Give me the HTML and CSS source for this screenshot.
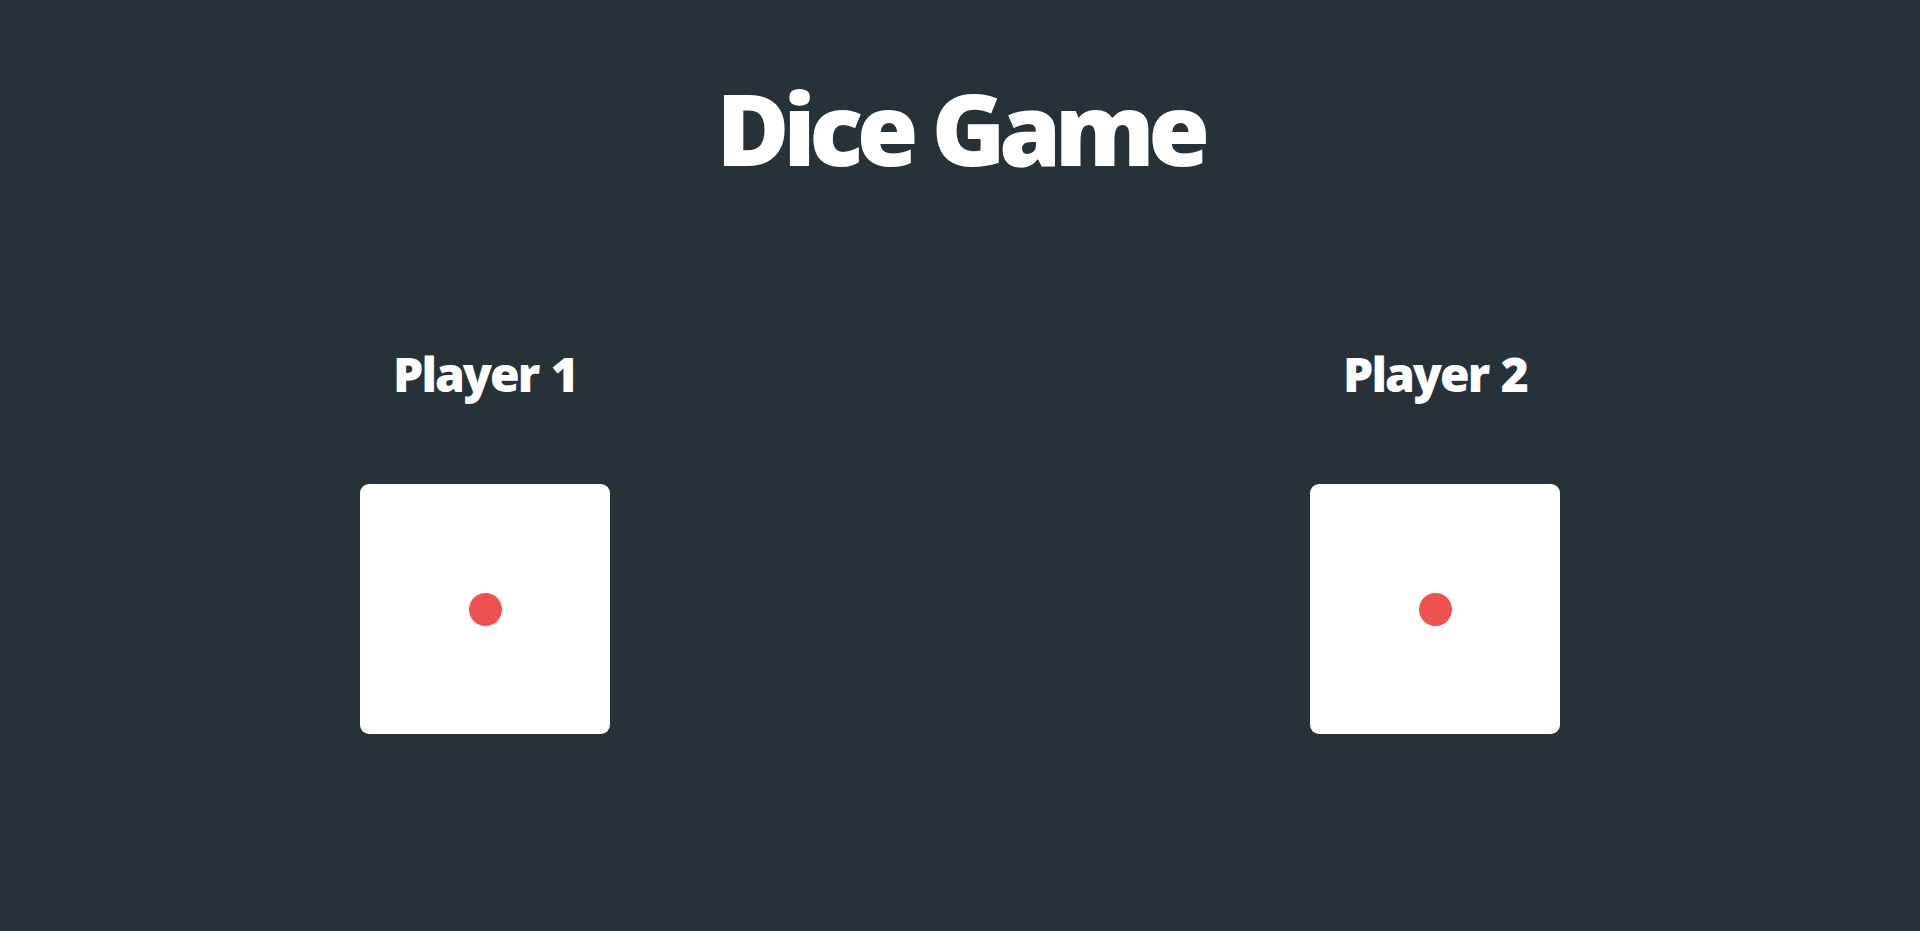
FILE: index.html
```html
<!DOCTYPE html>
<html lang="en">
<head>
<meta charset="utf-8">
<title>Dice Game</title>
<link rel="stylesheet" href="styles.css">
</head>
<body>
<div class="page">
  <h1 class="title">Dice Game</h1>
  <div class="players">
    <div class="player">
      <h2 class="player-name">Player 1</h2>
      <div class="die"><span class="pip"></span></div>
    </div>
    <div class="player">
      <h2 class="player-name">Player 2</h2>
      <div class="die"><span class="pip"></span></div>
    </div>
  </div>
</div>
</body>
</html>
```

FILE: styles.css
```css
html, body {
  margin: 0;
  padding: 0;
  height: 100%;
}
body {
  background: #263238;
  color: #ffffff;
  font-family: "Open Sans", "Noto Sans", sans-serif;
}
.page {
  display: flex;
  flex-direction: column;
  align-items: center;
  padding: 77px 10px 0;
}
.title {
  margin: 0;
  font-size: 100px;
  line-height: 1;
  font-weight: 800;
  letter-spacing: -6.5px;
  word-spacing: 0;
}
.players {
  display: flex;
  width: 100%;
  margin-top: 173px;
}
.player {
  flex: 1 1 0;
  display: flex;
  flex-direction: column;
  align-items: center;
}
.player-name {
  margin: 0;
  font-size: 48px;
  line-height: 1;
  font-weight: 800;
  letter-spacing: -2px;
  word-spacing: 2px;
}
.die {
  margin-top: 86px;
  width: 250px;
  height: 250px;
  background: #ffffff;
  border-radius: 9px;
  display: flex;
  align-items: center;
  justify-content: center;
}
.pip {
  width: 33px;
  height: 33px;
  border-radius: 50%;
  background: #ef5050;
}
```
